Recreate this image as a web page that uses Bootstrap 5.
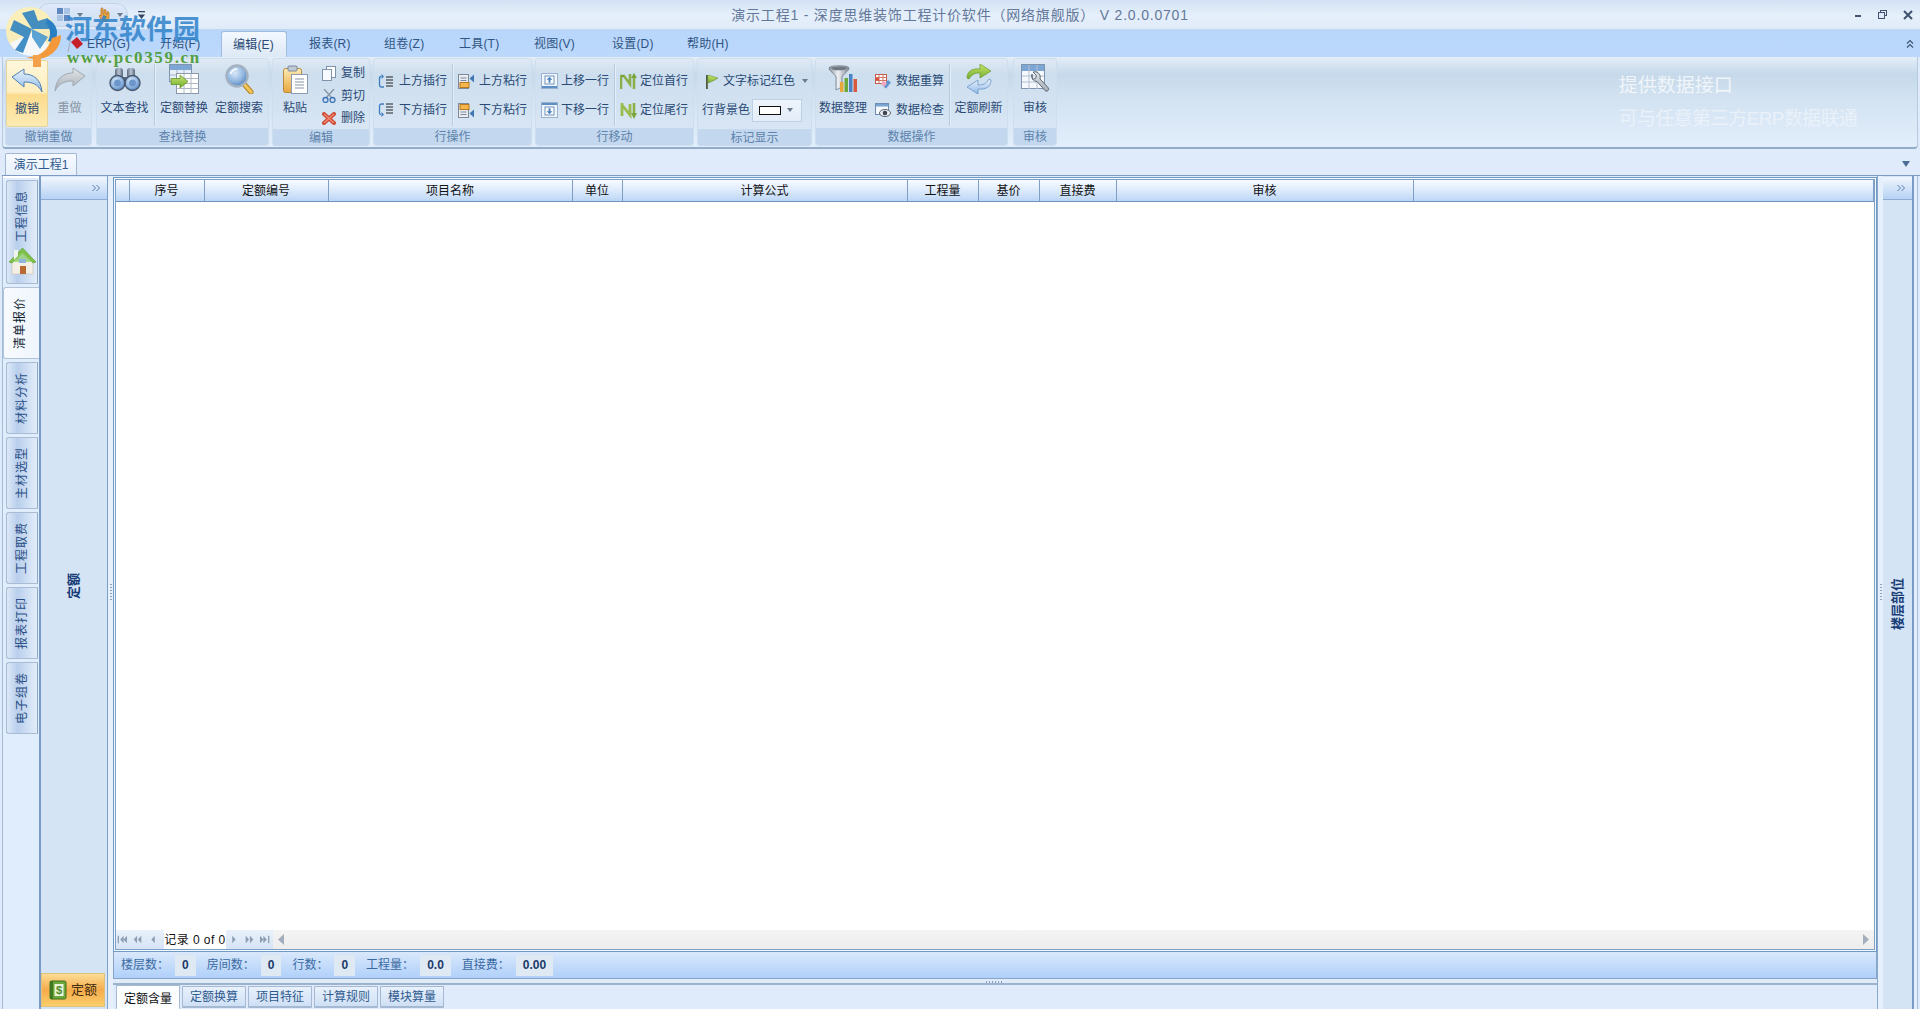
<!DOCTYPE html>
<html lang="zh">
<head>
<meta charset="utf-8">
<title>深度思维装饰工程计价软件</title>
<link href="https://cdn.jsdelivr.net/npm/bootstrap@5.3.0/dist/css/bootstrap.min.css" rel="stylesheet">
<style>
html,body{height:100%;margin:0;overflow:hidden}
body{font-family:"Liberation Sans","Noto Sans CJK SC",sans-serif;font-size:12px;line-height:16px;background:#dfebfb;color:#2a4a75}
.appw{width:1920px;height:1009px;position:relative;overflow:hidden}
.defs0{width:0;height:0;flex:none}
/* title */
.tbar{height:30px;flex:none;display:grid;grid-template-columns:1fr auto 1fr;align-items:center;background:linear-gradient(#d3e2f4,#e6f0fb 55%,#dfeafa);border-bottom:1px solid #c2d6ec}
.ttl{font-size:14px;letter-spacing:.8px;color:#63789a;white-space:nowrap;line-height:20px;padding-top:1px}
.qa{margin-left:37px;width:91px;height:24px;border:1px solid #c4d4e6;border-radius:12px;background:linear-gradient(#dfeafa,#cfdff3);gap:7px;padding-left:19px}
.qadrop{margin-left:10px;color:#333}
.wctl{gap:16px;padding-right:7px}
/* menu */
.mbar{height:27px;flex:none;padding-left:70px;background:linear-gradient(#b8d6fb,#bcd9fc);align-items:flex-end}
.mit{height:26px;width:75px;padding:0 0 0 17px;line-height:27px;letter-spacing:.2px;color:#2f5483;white-space:nowrap;flex:none}
.mit.w73{width:73px}.mit.w78{width:78px}.mit.mr3{margin-right:3px}
.mit.act{padding:0 0 0 11px;margin:0 5px 0 0;background:linear-gradient(#f3f8fe,#dde9f7);border:1px solid #9fbcdd;border-bottom:0;border-radius:3px 3px 0 0;width:66px;color:#2a4a75;line-height:26px}
.mchev{padding-right:6px;height:26px}
/* ribbon */
.ribn{height:92px;flex:none;margin:0 2px 0 2px;border:1px solid #b6cbe2;border-top:0;border-bottom:2px solid #93adc9;border-radius:0 0 4px 4px;background:linear-gradient(#e4eef8 0,#c6d9ea 19%,#d2e2f1 45%,#e2eefc 100%);padding:1px 0 0 2px;gap:3px}
.rgrp{height:88px;flex:none;border:1px solid #cfdeee;border-radius:3px;background:linear-gradient(#dfe9f4,#cddeee 18%,#dbe8f6 100%)}
.rbody{height:70px}
.rcap{height:17px;flex:none;text-align:center;line-height:19px;background:#c3d8ee;color:#5d82ac;border-radius:0 0 3px 3px}
.g1{width:87px;margin-right:1px}.g2{width:173px}.g3{width:98px}.g4{width:159px}.g5{width:159px}.g6{width:115px}.g7{width:193px;margin-right:2px}.g8{width:44px}
.bigb{padding-top:4px;color:#2c4a76;flex:none}
.bigb .ibx{height:32px}
.bigb .lbl{margin-top:5px;white-space:nowrap;line-height:16px}
.w42{width:42px}.w43{width:43px}.w55{width:55px}.w58{width:58px}.w52{width:52px}.w44{width:44px}.w54{width:54px}.w57{width:57px}
.bhot{height:67px;margin-top:1px;padding-top:3px;background:linear-gradient(#fff7dc,#fdeebf 48%,#fbdc8c 52%,#fdebb4);border:1px solid #e6d49f;border-radius:2px}
.bdis{color:#8896a6}
.vsep{width:1px;height:62px;background:#b6cade;box-shadow:1px 0 0 #e6eff8;margin-top:5px;flex:none}
.ml2x{margin-left:2px}.ml5x{margin-left:5px}
.col2{padding-top:8px;flex:none}
.col3{padding-top:3px;padding-left:5px;flex:none}
.srow{height:28px;margin-bottom:1px;white-space:nowrap}
.srow3{height:22.5px;white-space:nowrap}
.gapx5{gap:5px}.gapx3{gap:3px}
.pl4x{padding-left:4px}.pl5x{padding-left:5px}.pl7x{padding-left:7px}
.tx48{width:48px}
.combo{width:50px;height:23px;margin-left:2px;background:linear-gradient(#eef4fb,#e3edf8);border:1px solid #bcd0e6}
.combo i{display:block;width:22px;height:9px;border:1px solid #111;background:#fff;margin-left:6px}
.caret1{width:0;height:0;border:3px solid transparent;border-top:4px solid #6b7c90;border-bottom:0}
.banr{margin-left:auto;padding-right:60px;padding-top:16px;color:#fff;line-height:24px;white-space:nowrap}
.banr .l1{font-size:19px;opacity:.72;height:33px}
.banr .l2{font-size:19px;letter-spacing:-.7px;opacity:.45}
/* doc row */
.drow{height:26px;flex:none;padding:4px 0 0 5px;justify-content:space-between;position:relative}
.dtab{width:72px;height:22px;border:1px solid #a3b7d0;border-bottom:0;border-radius:2px 2px 0 0;background:linear-gradient(#f6fafe,#e7f0fb);text-align:center;line-height:23px;color:#2f5a8f}
.dcaret{width:0;height:0;border:4px solid transparent;border-top:6px solid #4b6d96;border-bottom:0;margin:8px 10px 0 0}
/* main */
.mainr{flex:1 1 auto;min-height:0;border-top:1px solid #7c9ac4;margin-left:2px}
.railx{width:37px;flex:none;border-left:1px solid #a6bbd6;padding-top:4px;gap:3px;background:#e0edfd;box-shadow:inset 0 2px 0 #fff}
.rtab{width:32px;height:72px;margin-left:3px;border:1px solid #a9bcd3;border-right-color:#8ea8c8;border-radius:3px 0 0 3px;background:linear-gradient(90deg,#dce8f7 0,#b9cfec 35%,#d6e4f6 80%,#e2ecf9);color:#2a4f86;padding-top:0}
.rtab.first{height:104px;padding-top:9px}
.houseic{margin-top:5px}
.rtab.cur{width:36px;margin-left:0;background:linear-gradient(90deg,#f7fbff,#eff5fd);color:#0c1a30;padding-right:4px;border-color:#b2c3d8;border-right:0;margin-right:-1px}
.vtx{writing-mode:vertical-rl;text-orientation:sideways;transform:rotate(180deg);letter-spacing:1px;line-height:16px;white-space:nowrap}
.pnlL{width:69px;flex:none;border-left:2px solid #7a9bc8;border-right:1px solid #7da0c8;background:#d5e4f4}
.phd{height:23px;flex:none;margin-top:1px;background:linear-gradient(#f0f6fe,#b6d2f4);border-bottom:1px solid #8eaccf;justify-content:flex-end;padding-right:7px;align-items:center}
.pcap{font-weight:700;font-size:13px;color:#173c78;letter-spacing:0}
.dbtn{width:64px;height:34px;flex:none;margin:0 0 2px 0;background:linear-gradient(#fcdd95,#f6ab4b 50%,#fbcf6d);border:1px solid #e0c17a;color:#3e2c10;font-size:13px;gap:4px}
.splv{width:5px;flex:none;background:#e6f0fc;justify-content:center;align-items:center}
.grip{width:2px;height:18px;background:repeating-linear-gradient(#8ba0b8 0,#8ba0b8 1px,transparent 1px,transparent 3px)}
.cenc{width:1764px;flex:none}
.gfrm{flex:1 1 auto;min-height:0;margin-top:1px;border:1px solid #6f9ac4;padding:1px;background:#f2f7fd}
.gin{height:100%;border:1px solid #7ea0c6;background:#fff}
.gtbl{table-layout:fixed;width:1758px;margin:0;border-collapse:collapse;flex:none}
.gtbl th{height:21px;padding:0;font-weight:400;font-size:12px;line-height:20px;text-align:center;color:#111;background:linear-gradient(#f6faff,#e3eefc 40%,#bcd6f6);border:0;border-right:1px solid #7ea0c6;border-bottom:1px solid #6f93bd;box-shadow:none}
.pgr{height:19px;flex:none;background:linear-gradient(#f4f4f4,#ededed);margin-top:auto}
.pgn{width:157px;height:19px;flex:none;background:linear-gradient(#e9f1fb,#d6e4f6)}
.pgn .rec{width:62px;height:19px;background:#fff;color:#111;line-height:21px;margin:0 2px 0 0;letter-spacing:.45px;text-align:center;white-space:nowrap;flex:none}
.pgi{width:11px;height:9px;margin-right:5px;flex:none}
.pgr .lft{margin-left:5px}.pgr .rgt{margin-left:auto;margin-right:5px}
.stbar{height:27px;flex:none;background:linear-gradient(#d9e8fb,#b0d0fa);border:1px solid #86a5c8;border-top:0;padding-left:7px;color:#3a6aa3;white-space:nowrap;line-height:18px}
.stbar b{display:block;height:21px;padding:0 7px;line-height:21px;margin:0 11px 0 6px;background:#dfe9f4;color:#1a3a6a;font-size:12px}
.splh{height:6px;flex:none;position:relative;align-items:center;justify-content:center}
.splh::after{content:"";position:absolute;left:0;right:0;bottom:0;height:2px;background:#9db2cc}
.griph{width:18px;height:2px;background:repeating-linear-gradient(90deg,#8ba0b8 0,#8ba0b8 1px,transparent 1px,transparent 3px)}
.btabs{height:24px;flex:none;padding-left:3px;gap:2px;align-items:flex-start}
.btab{width:64px;height:22px;margin-top:1px;border:1px solid #a5b9d2;border-bottom-width:2px;border-radius:1px;background:linear-gradient(#e8f1fc,#cfe0f5);color:#2f5a8f;text-align:center;line-height:21px;white-space:nowrap}
.btab.on{height:24px;margin-top:0;background:#fbfdff;color:#111;border-bottom:0;line-height:26px}
.splr{width:6px;flex:none;background:#e6f0fc;border-left:1px solid #8aa8cc;justify-content:center;align-items:center}
.pnlR{width:31px;flex:none;border-right:2px solid #7a9bc8;background:#d5e4f4}
.redge{width:4px;flex:none;border-right:1px solid #a8bdd6;background:#e3eefb}
/* watermark */
.orb{position:absolute;left:4px;top:5px;width:60px;height:62px;pointer-events:none}
.wm1{position:absolute;left:65px;top:14px;font-size:27px;line-height:32px;font-weight:700;color:#2f83cb;opacity:.85;white-space:nowrap}
.wm2{position:absolute;left:67px;top:49px;font-family:"Liberation Serif",serif;font-size:17px;line-height:18px;font-weight:700;color:#47992f;white-space:nowrap;letter-spacing:1.65px;opacity:.9}
.erpi{position:absolute;left:66px;top:35px;width:18px;height:18px}
</style>
</head>
<body>
<div class="appw d-flex flex-column">
<svg class="defs0" width="0" height="0" aria-hidden="true">
<defs>
<linearGradient id="gBlue" x1="0" y1="0" x2="0" y2="1"><stop offset="0" stop-color="#eaf3fc"/><stop offset="1" stop-color="#8fb9e6"/></linearGradient>
<linearGradient id="gGray" x1="0" y1="0" x2="0" y2="1"><stop offset="0" stop-color="#e4e7ea"/><stop offset="1" stop-color="#a3abb3"/></linearGradient>
<linearGradient id="gSteel" x1="0" y1="0" x2="1" y2="0"><stop offset="0" stop-color="#5c6c80"/><stop offset=".5" stop-color="#b9c5d2"/><stop offset="1" stop-color="#56657a"/></linearGradient>
<radialGradient id="gLens" cx=".4" cy=".35" r=".7"><stop offset="0" stop-color="#dbe9f8"/><stop offset=".6" stop-color="#8fb5e0"/><stop offset="1" stop-color="#4f7fb8"/></radialGradient>
<linearGradient id="gGold" x1="0" y1="0" x2="0" y2="1"><stop offset="0" stop-color="#fdeab4"/><stop offset="1" stop-color="#e8a63c"/></linearGradient>
<linearGradient id="gGreen" x1="0" y1="0" x2="0" y2="1"><stop offset="0" stop-color="#c9e56f"/><stop offset="1" stop-color="#6fae2c"/></linearGradient>
<linearGradient id="gFun" x1="0" y1="0" x2="1" y2="0"><stop offset="0" stop-color="#8b939c"/><stop offset=".45" stop-color="#eef1f4"/><stop offset="1" stop-color="#7f8892"/></linearGradient>
<linearGradient id="gOrange" x1="0" y1="0" x2="0" y2="1"><stop offset="0" stop-color="#fbc468"/><stop offset="1" stop-color="#ee8f2c"/></linearGradient>
</defs>
</svg>

<!-- title bar -->
<div class="tbar">
  <div class="d-flex align-items-center">
    <div class="qa d-flex align-items-center">
      <svg width="13" height="13" viewBox="0 0 13 13"><rect x="0" y="0" width="6" height="6" fill="#5f88c0"/><rect x="7" y="0" width="6" height="6" fill="#a8c3e4"/><rect x="0" y="7" width="6" height="6" fill="#a8c3e4"/><rect x="7" y="7" width="6" height="6" fill="#5f88c0"/></svg>
      <span class="caret1"></span>
      <svg class="ms-2" width="12" height="15" viewBox="0 0 12 15"><path d="M3 1.5c1-1 2-.6 2 .5v5l1-.2V3c1-1 2-.5 2 .5v4l1 .2V5c1-.6 2-.2 2 1v4c0 3-2 4.5-4.5 4.5C4 14.500 3 13 1.500 9.500 1 8 2.500 7.500 3 9z" fill="#f1a93f" stroke="#a9691a" stroke-width=".7"/></svg>
      <span class="caret1"></span>
    </div>
    <svg class="qadrop" width="7" height="8" viewBox="0 0 7 8"><rect y="0" width="7" height="1.300" fill="#33475f"/><path d="M0 3.500h7L3.500 8z" fill="#33475f"/></svg>
  </div>
  <div class="ttl">演示工程1 - 深度思维装饰工程计价软件（网络旗舰版） V 2.0.0.0701</div>
  <div class="wctl d-flex justify-content-end align-items-center">
    <svg width="8" height="8" viewBox="0 0 8 8"><rect x="1" y="4" width="6" height="2" fill="#41536e"/></svg>
    <svg width="9" height="9" viewBox="0 0 9 9"><rect x="2.500" y=".5" width="6" height="5" fill="none" stroke="#41536e"/><rect x=".5" y="2.500" width="6" height="6" fill="#dfeafa" stroke="#41536e"/></svg>
    <svg width="10" height="10" viewBox="0 0 10 10"><path d="M1 1l8 8M9 1L1 9" stroke="#41536e" stroke-width="2"/></svg>
  </div>
</div>

<!-- menu bar -->
<div class="mbar d-flex">
  <div class="mit w73">ERP(G)</div>
  <div class="mit mr3">开始(F)</div>
  <div class="mit act">编辑(E)</div>
  <div class="mit">报表(R)</div>
  <div class="mit">组卷(Z)</div>
  <div class="mit">工具(T)</div>
  <div class="mit w78">视图(V)</div>
  <div class="mit">设置(D)</div>
  <div class="mit">帮助(H)</div>
  <div class="mchev ms-auto d-flex align-items-center"><svg width="8" height="10" viewBox="0 0 8 10"><path d="M1 4.500l3-3 3 3M1 8.500l3-3 3 3" fill="none" stroke="#3f5674" stroke-width="1.200"/></svg></div>
</div>

<!-- ribbon -->
<div class="ribn d-flex">
  <div class="rgrp g1 d-flex flex-column">
    <div class="rbody d-flex">
      <div class="bigb bhot w42 d-flex flex-column align-items-center">
        <div class="ibx d-flex align-items-center"><svg width="32" height="25" viewBox="0 0 32 25"><path d="M1 9L13 1v5c9 0 17 5 18 18-4-8-10-10-18-10v5z" fill="url(#gBlue)" stroke="#4d7fb4"/></svg></div>
        <div class="lbl">撤销</div>
      </div>
      <div class="bigb bdis w43 d-flex flex-column align-items-center">
        <div class="ibx d-flex align-items-center"><svg width="32" height="25" viewBox="0 0 32 25"><path d="M31 9L19 1v5C10 6 2 11 1 24c4-8 10-10 18-10v5z" fill="url(#gGray)" stroke="#a0a9b2"/></svg></div>
        <div class="lbl">重做</div>
      </div>
    </div>
    <div class="rcap mt-auto">撤销重做</div>
  </div>

  <div class="rgrp g2 d-flex flex-column">
    <div class="rbody d-flex">
      <div class="bigb w55 d-flex flex-column align-items-center">
        <div class="ibx d-flex align-items-center"><svg width="32" height="25" viewBox="0 0 32 25"><rect x="6" y="1" width="8" height="11" rx="3" fill="url(#gSteel)"/><rect x="18" y="1" width="8" height="11" rx="3" fill="url(#gSteel)"/><rect x="13" y="10" width="6" height="6" fill="#5a6980"/><circle cx="8.500" cy="16" r="7.500" fill="url(#gLens)" stroke="#4a5a70" stroke-width="1.400"/><circle cx="23.500" cy="16" r="7.500" fill="url(#gLens)" stroke="#4a5a70" stroke-width="1.400"/><circle cx="8.500" cy="16" r="3.500" fill="#6d97cb"/><circle cx="23.500" cy="16" r="3.500" fill="#6d97cb"/></svg></div>
        <div class="lbl">文本查找</div>
      </div>
      <div class="vsep ml2x"></div>
      <div class="bigb w58 d-flex flex-column align-items-center">
        <div class="ibx d-flex align-items-center"><svg width="30" height="30" viewBox="0 0 30 30"><rect x=".5" y=".5" width="22" height="17" fill="#e7eff8" stroke="#7f94ae"/><rect x="1" y="1" width="21" height="5" fill="#7ea6d4"/><path d="M8 6v11M15 6v11M1 11h21" stroke="#a3b6cb"/><rect x="7.500" y="9.500" width="22" height="20" fill="#fff" stroke="#8a97a8"/><path d="M7.500 14.500h22M7.500 19.500h22M7.500 24.500h22M15 9.500v20M22 9.500v20" stroke="#aeb8c4"/><path d="M2 14.500h9V11l8 6.500L11 24v-3.500H2z" fill="url(#gGreen)" stroke="#5b8c23" stroke-width=".7"/></svg></div>
        <div class="lbl">定额替换</div>
      </div>
      <div class="bigb w52 d-flex flex-column align-items-center">
        <div class="ibx d-flex align-items-center"><svg width="29" height="30" viewBox="0 0 29 30"><path d="M19 20l7 8" stroke="#b4801f" stroke-width="5" stroke-linecap="round"/><path d="M19 20l7 8" stroke="#f3c65b" stroke-width="3" stroke-linecap="round"/><circle cx="12" cy="12" r="10.500" fill="url(#gLens)" stroke="#a4b2c2" stroke-width="2.400"/><path d="M5.500 10c1-3 3.500-5 7-5" fill="none" stroke="#fff" stroke-width="1.500"/></svg></div>
        <div class="lbl">定额搜索</div>
      </div>
    </div>
    <div class="rcap mt-auto">查找替换</div>
  </div>

  <div class="rgrp g3 d-flex flex-column">
    <div class="rbody d-flex">
      <div class="bigb w44 d-flex flex-column align-items-center">
        <div class="ibx d-flex align-items-center"><svg width="25" height="29" viewBox="0 0 25 29"><rect x=".5" y="3.500" width="18" height="24" rx="2" fill="url(#gGold)" stroke="#b88a3c"/><rect x="5" y="1" width="9" height="5" rx="1" fill="#c0c9d4" stroke="#7d8a9b"/><rect x="8.500" y="9.500" width="16" height="19" fill="#fff" stroke="#8d9bb0"/><path d="M12 14h9M12 17h9M12 20h9M12 23h9" stroke="#8793a5"/></svg></div>
        <div class="lbl">粘贴</div>
      </div>
      <div class="col3">
        <div class="srow3 d-flex align-items-center gapx5"><svg width="14" height="15" viewBox="0 0 14 15"><rect x="4.500" y=".5" width="9" height="11" fill="#fff" stroke="#7f93ac"/><rect x=".5" y="3.500" width="9" height="11" fill="#f6f9fd" stroke="#7f93ac"/></svg><span>复制</span></div>
        <div class="srow3 d-flex align-items-center gapx5"><svg width="14" height="14" viewBox="0 0 14 14"><path d="M12 0L4 9M2 0l8 9" stroke="#8d99a9" stroke-width="1.500"/><circle cx="3.500" cy="11" r="2.500" fill="#c8dbf0" stroke="#3f75b5" stroke-width="1.300"/><circle cx="10.500" cy="11" r="2.500" fill="#c8dbf0" stroke="#3f75b5" stroke-width="1.300"/></svg><span>剪切</span></div>
        <div class="srow3 d-flex align-items-center gapx5"><svg width="14" height="13" viewBox="0 0 14 13"><path d="M2 2l10 9M12 2L2 11" stroke="#cf4a36" stroke-width="4" stroke-linecap="round"/><path d="M2.500 2.500l9 8M11.500 2.500l-9 8" stroke="#f08a72" stroke-width="1.500" stroke-linecap="round"/></svg><span>删除</span></div>
      </div>
    </div>
    <div class="rcap mt-auto">编辑</div>
  </div>

  <div class="rgrp g4 d-flex flex-column">
    <div class="rbody d-flex">
      <div class="col2 pl4x">
        <div class="srow d-flex align-items-center gapx5"><svg width="16" height="14" viewBox="0 0 16 14"><path d="M8 3h7M8 6h7M8 9h7M8 12h7" stroke="#222" stroke-width="1.100"/><path d="M6 13H3.500C2 13 1.500 12 1.500 11V4C1.500 3 2 2.500 3 2.500" fill="none" stroke="#3f7cc0" stroke-width="1.300"/><path d="M3.500 0v5L6 2.500z" fill="#3f7cc0"/></svg><span class="tx48">上方插行</span></div>
        <div class="srow d-flex align-items-center gapx5"><svg width="16" height="14" viewBox="0 0 16 14"><path d="M8 1h7M8 4h7M8 7h7M8 10h7" stroke="#222" stroke-width="1.100"/><path d="M6 1H3.500C2 1 1.500 2 1.500 3v7c0 1 .5 1.500 1.500 1.500" fill="none" stroke="#3f7cc0" stroke-width="1.300"/><path d="M3.500 9v5L6 11.500z" fill="#3f7cc0"/></svg><span class="tx48">下方插行</span></div>
      </div>
      <div class="vsep ml5x"></div>
      <div class="col2 ml5x">
        <div class="srow d-flex align-items-center gapx5"><svg width="16" height="15" viewBox="0 0 16 15"><rect x=".5" y=".5" width="10" height="14" fill="#e9edf2" stroke="#7f8a98"/><path d="M2.500 4h6M2.500 6.500h6" stroke="#7d8a9b"/><rect x="2" y="8.500" width="9" height="5" fill="#f6b64e" stroke="#b97a1f"/><path d="M16 .5v8L11.500 4.500z" fill="#4277b5"/></svg><span class="tx48">上方粘行</span></div>
        <div class="srow d-flex align-items-center gapx5"><svg width="16" height="15" viewBox="0 0 16 15"><rect x=".5" y=".5" width="10" height="14" fill="#e9edf2" stroke="#7f8a98"/><rect x="2" y="1.500" width="9" height="5" fill="#f6b64e" stroke="#b97a1f"/><path d="M2.500 9h6M2.500 11.500h6" stroke="#7d8a9b"/><path d="M16 6.500v8l-4.500-4z" fill="#4277b5"/></svg><span class="tx48">下方粘行</span></div>
      </div>
    </div>
    <div class="rcap mt-auto">行操作</div>
  </div>

  <div class="rgrp g5 d-flex flex-column">
    <div class="rbody d-flex">
      <div class="col2 pl5x">
        <div class="srow d-flex align-items-center gapx3"><svg width="17" height="16" viewBox="0 0 17 16"><rect x=".5" y=".5" width="16" height="15" fill="#f1f6fc" stroke="#9ab2cf"/><rect x="4" y="3" width="9" height="8" fill="#fff" stroke="#6f92bb"/><path d="M8.500 3.800l3 3h-2v3h-2v-3h-2z" fill="#4d83be"/><rect x="1" y="13" width="15" height="2" fill="#5e8fc4"/></svg><span class="tx48">上移一行</span></div>
        <div class="srow d-flex align-items-center gapx3"><svg width="17" height="16" viewBox="0 0 17 16"><rect x=".5" y=".5" width="16" height="15" fill="#f1f6fc" stroke="#9ab2cf"/><rect x="1" y="1" width="15" height="2" fill="#5e8fc4"/><rect x="4" y="5" width="9" height="8" fill="#fff" stroke="#6f92bb"/><path d="M8.500 12.200l3-3h-2v-3h-2v3h-2z" fill="#4d83be"/></svg><span class="tx48">下移一行</span></div>
      </div>
      <div class="vsep ml5x"></div>
      <div class="col2 ml5x">
        <div class="srow d-flex align-items-center gapx3"><svg width="17" height="17" viewBox="0 0 17 17"><path d="M1 16V3h3l6 8V1" fill="none" stroke="#8ab04a" stroke-width="2.600"/><path d="M14 16V5" stroke="#8ab04a" stroke-width="2.600"/><path d="M14 0l3 5h-6z" fill="#7aa53a"/><path d="M1 3l3 0" stroke="#6f8f34"/></svg><span class="tx48">定位首行</span></div>
        <div class="srow d-flex align-items-center gapx3"><svg width="17" height="17" viewBox="0 0 17 17"><path d="M2 1v13M2 3l8 10V2" fill="none" stroke="#9abc4d" stroke-width="2.800"/><path d="M14 1v10" stroke="#8ab04a" stroke-width="2.600"/><path d="M14 17l3-6h-6z" fill="#7aa53a"/></svg><span class="tx48">定位尾行</span></div>
      </div>
    </div>
    <div class="rcap mt-auto">行移动</div>
  </div>

  <div class="rgrp g6 d-flex flex-column">
    <div class="rbody col2 ps-0">
      <div class="srow d-flex align-items-center pl7x gapx3"><svg width="15" height="15" viewBox="0 0 15 15"><rect x="1" y="1" width="1.800" height="14" fill="#4d5a3e"/><path d="M3 1.500c4 0 5 1.500 10 2.500-3 2-6 3.500-10 5z" fill="url(#gGreen)" stroke="#6d8e37" stroke-width=".6"/></svg><span>文字标记红色</span><span class="caret1 ms-1"></span></div>
      <div class="srow d-flex align-items-center pl4x"><span class="tx48">行背景色</span><div class="combo d-flex align-items-center justify-content-between"><i></i><span class="caret1 me-2"></span></div></div>
    </div>
    <div class="rcap mt-auto">标记显示</div>
  </div>

  <div class="rgrp g7 d-flex flex-column">
    <div class="rbody d-flex">
      <div class="bigb w54 d-flex flex-column align-items-center">
        <div class="ibx d-flex align-items-center"><svg width="31" height="28" viewBox="0 0 31 28"><path d="M1 3c0-3 20-3 20 0 0 3-6 6-7 9v10l-6 3V12C7 9 1 6 1 3z" fill="url(#gFun)" stroke="#6f7a86" stroke-width=".8"/><ellipse cx="11" cy="3.300" rx="8" ry="2" fill="#6f7883"/><rect x="12" y="17" width="3.500" height="10" fill="#e8a73a"/><rect x="16.500" y="13" width="3.500" height="14" fill="#69a83c"/><rect x="21" y="9" width="3.500" height="18" fill="#4a84c4"/><rect x="25.500" y="14" width="3.500" height="13" fill="#d8593c"/></svg></div>
        <div class="lbl">数据整理</div>
      </div>
      <div class="col2 ml5x">
        <div class="srow d-flex align-items-center gapx5"><svg width="16" height="15" viewBox="0 0 16 15"><rect x=".5" y=".5" width="11" height="9" fill="#fff" stroke="#c25b4a"/><path d="M.5 3.500h11M.5 6.500h11M4 .5v9M8 .5v9" stroke="#d07565"/><rect x="1" y="4" width="3" height="2.500" fill="#e04f3a"/><path d="M8 12l5-6 3 2.500-5 6z" fill="#5f94d0"/><path d="M6 10l3-3 3 2.500-3 3.500z" fill="#f1a7c0"/></svg><span class="tx48">数据重算</span></div>
        <div class="srow d-flex align-items-center gapx5"><svg width="16" height="14" viewBox="0 0 16 14"><rect x=".5" y=".5" width="13" height="11" fill="#f6f9fd" stroke="#6f8db3"/><rect x="1" y="1" width="12" height="2.500" fill="#79a3d1"/><ellipse cx="10" cy="10" rx="5.500" ry="3.500" fill="#eef1f5" stroke="#5a6470"/><circle cx="10" cy="10" r="2.300" fill="#3e4854"/></svg><span class="tx48">数据检查</span></div>
      </div>
      <div class="vsep ml5x"></div>
      <div class="bigb w57 d-flex flex-column align-items-center">
        <div class="ibx d-flex align-items-center"><svg width="28" height="30" viewBox="0 0 28 30"><path d="M2 14C2 7 8 4 15 5V0l11 7-11 7V9c-5 0-8 1-11 6z" fill="url(#gGreen)" stroke="#6e9a2c" stroke-width=".7"/><path d="M26 16c0 7-6 10-13 9v5L2 23l11-7v5c5 0 8-1 11-6z" fill="url(#gBlue)" stroke="#5c8dc4" stroke-width=".7"/></svg></div>
        <div class="lbl">定额刷新</div>
      </div>
    </div>
    <div class="rcap mt-auto">数据操作</div>
  </div>

  <div class="rgrp g8 d-flex flex-column">
    <div class="rbody d-flex">
      <div class="bigb w42 d-flex flex-column align-items-center">
        <div class="ibx d-flex align-items-center"><svg width="29" height="31" viewBox="0 0 29 31"><rect x=".5" y=".5" width="23" height="24" fill="#f5f8fc" stroke="#7f94ae"/><rect x="1" y="1" width="22" height="6" fill="#7ea6d4"/><path d="M8 1v24M16 1v24M1 12h22M1 18h22" stroke="#b3c1d2"/><path d="M11 10a5.500 5.500 0 0 0 5 7.500l8 9c2 2 5-1 3-3l-8-8.500a5.500 5.500 0 0 0-7-7l3.500 3.500-1 3-3 .8z" fill="url(#gGray)" stroke="#5d6976"/></svg></div>
        <div class="lbl">审核</div>
      </div>
    </div>
    <div class="rcap mt-auto">审核</div>
  </div>

  <div class="banr"><div class="l1">提供数据接口</div><div class="l2">可与任意第三方ERP数据联通</div></div>
</div>

<!-- doc tab row -->
<div class="drow d-flex">
  <div class="dtab">演示工程1</div>
  <div class="dcaret"></div>
</div>

<!-- main -->
<div class="mainr d-flex">
  <div class="railx d-flex flex-column">
    <div class="rtab first d-flex flex-column align-items-center"><span class="vtx">工程信息</span>
      <svg class="houseic" width="27" height="28" viewBox="0 0 27 28"><path d="M3 13h21v14H3z" fill="#f4efe6" stroke="#c9c0b0" stroke-width=".6"/><path d="M0 15L13.500 1 27 15l-3 1L13.500 6 3 16z" fill="#7cc04a" stroke="#5a9a30" stroke-width=".6"/><path d="M5 3h4v6l-4 4z" fill="#eef3ec"/><path d="M3 15L13.500 5 24 15z" fill="#8fd05a" opacity=".7"/><rect x="11" y="19" width="6" height="8" fill="#b86a33"/><rect x="10" y="12" width="7" height="4" fill="#8fb7dc"/></svg>
    </div>
    <div class="rtab cur d-flex align-items-center justify-content-center"><span class="vtx">清单报价</span></div>
    <div class="rtab d-flex align-items-center justify-content-center"><span class="vtx">材料分析</span></div>
    <div class="rtab d-flex align-items-center justify-content-center"><span class="vtx">主材选型</span></div>
    <div class="rtab d-flex align-items-center justify-content-center"><span class="vtx">工程取费</span></div>
    <div class="rtab d-flex align-items-center justify-content-center"><span class="vtx">报表打印</span></div>
    <div class="rtab d-flex align-items-center justify-content-center"><span class="vtx">电子组卷</span></div>
  </div>

  <div class="pnlL d-flex flex-column">
    <div class="phd d-flex"><svg width="8" height="8" viewBox="0 0 8 8"><path d="M.5 1l3 3-3 3M4.500 1l3 3-3 3" fill="none" stroke="#5d7fa8" stroke-width="1"/></svg></div>
    <div class="flex-grow-1 d-flex align-items-center justify-content-center"><span class="vtx pcap">定额</span></div>
    <div class="dbtn d-flex align-items-center justify-content-center">
      <svg width="18" height="20" viewBox="0 0 18 20"><rect x="1" y="1" width="16" height="18" rx="1.500" fill="#6fa83a" stroke="#3f6e1c"/><rect x="1" y="1" width="3" height="18" fill="#3f7a23"/><rect x="5.500" y="4" width="9" height="12" fill="#eaf4da"/><text x="10" y="14" font-size="11" font-weight="700" text-anchor="middle" fill="#4f8a26" font-family="Liberation Sans">$</text></svg>
      <span>定额</span>
    </div>
  </div>

  <div class="splv d-flex"><span class="grip"></span></div>

  <div class="cenc d-flex flex-column">
    <div class="gfrm">
      <div class="gin d-flex flex-column">
        <table class="table gtbl">
          <colgroup><col style="width:13px"><col style="width:75px"><col style="width:124px"><col style="width:244px"><col style="width:50px"><col style="width:285px"><col style="width:71px"><col style="width:61px"><col style="width:77px"><col style="width:297px"><col></colgroup>
          <thead><tr><th></th><th>序号</th><th>定额编号</th><th>项目名称</th><th>单位</th><th>计算公式</th><th>工程量</th><th>基价</th><th>直接费</th><th>审核</th><th></th></tr></thead>
        </table>
        <div class="pgr d-flex align-items-center">
          <div class="pgn d-flex align-items-center">
            <svg class="pgi" viewBox="0 0 13 9"><path d="M2 0h1.500v9H2zM9 0v9L5 4.500zM13 0v9L9 4.500z" fill="#8c9cb2"/></svg>
            <svg class="pgi" viewBox="0 0 13 9"><path d="M6 0v9L2 4.500zM11 0v9L7 4.500z" fill="#8c9cb2"/></svg>
            <svg class="pgi" viewBox="0 0 13 9"><path d="M8 0v9L4 4.500z" fill="#8c9cb2"/></svg>
            <span class="rec">记录 0 of 0</span>
            <svg class="pgi" viewBox="0 0 13 9"><path d="M5 0v9l4-4.500z" fill="#8c9cb2"/></svg>
            <svg class="pgi" viewBox="0 0 13 9"><path d="M2 0v9l4-4.500zM7 0v9l4-4.500z" fill="#8c9cb2"/></svg>
            <svg class="pgi" viewBox="0 0 13 9"><path d="M0 0v9l4-4.500zM4 0v9l4-4.500zM9.500 0H11v9H9.500z" fill="#8c9cb2"/></svg>
          </div>
          <svg class="lft" width="7" height="11" viewBox="0 0 7 11"><path d="M6 0v11L0 5.500z" fill="#a3aebd"/></svg>
          <svg class="rgt" width="7" height="11" viewBox="0 0 7 11"><path d="M1 0v11l6-5.500z" fill="#a3aebd"/></svg>
        </div>
      </div>
    </div>
    <div class="stbar d-flex align-items-center">
      <span>楼层数：</span><b>0</b><span>房间数：</span><b>0</b><span>行数：</span><b>0</b><span>工程量：</span><b>0.0</b><span>直接费：</span><b>0.00</b>
    </div>
    <div class="splh d-flex"><span class="griph"></span></div>
    <div class="btabs d-flex">
      <div class="btab on">定额含量</div>
      <div class="btab">定额换算</div>
      <div class="btab">项目特征</div>
      <div class="btab">计算规则</div>
      <div class="btab">模块算量</div>
    </div>
  </div>

  <div class="splr d-flex"><span class="grip"></span></div>
  <div class="pnlR d-flex flex-column">
    <div class="phd d-flex"><svg width="8" height="8" viewBox="0 0 8 8"><path d="M.5 1l3 3-3 3M4.500 1l3 3-3 3" fill="none" stroke="#5d7fa8" stroke-width="1"/></svg></div>
    <div class="flex-grow-1 d-flex align-items-center justify-content-center"><span class="vtx pcap">楼层部位</span></div>
  </div>
  <div class="redge"></div>
</div>

<!-- overlay logo and watermark -->
<svg class="erpi" viewBox="0 0 18 18"><path d="M2 17L5 2" stroke="#a9b2bc" stroke-width="1.200"/><path d="M5 7l6-5 6 7-6 5z" fill="#c5202a"/></svg>
<svg class="orb" viewBox="0 0 60 62">
  <circle cx="26" cy="26" r="24" fill="#fbeeb6" opacity=".95"/>
  <path d="M6 38a24 24 0 0 0 40 4L32 26z" fill="#f4f8fc" opacity=".95"/>
  <path d="M28 24L10 15 6 25l14 7-9 13 8 3z" fill="#2f83bf" opacity=".9"/>
  <path d="M28 24L18 8l12-3 4 11 10-3 2 11z" fill="#2f83bf" opacity=".9"/>
  <path d="M28 24l16 8-8 12-8-12z" fill="#3f93cf" opacity=".85"/>
  <path d="M44 14c9 5 12 14 6 24l-6-2c3-6 3-12-2-18z" fill="#2a7fc2"/>
  <path d="M57 30C57 44 46 54 32 54c-4 0-7-1-10-2 12 1 22-6 26-19z" fill="#f3983b"/>
  <rect x="29" y="50" width="8" height="12" fill="#f3a24b"/>
</svg>
<div class="wm1">河东软件园</div>
<div class="wm2">www.pc0359.cn</div>
</div>
</body>
</html>
